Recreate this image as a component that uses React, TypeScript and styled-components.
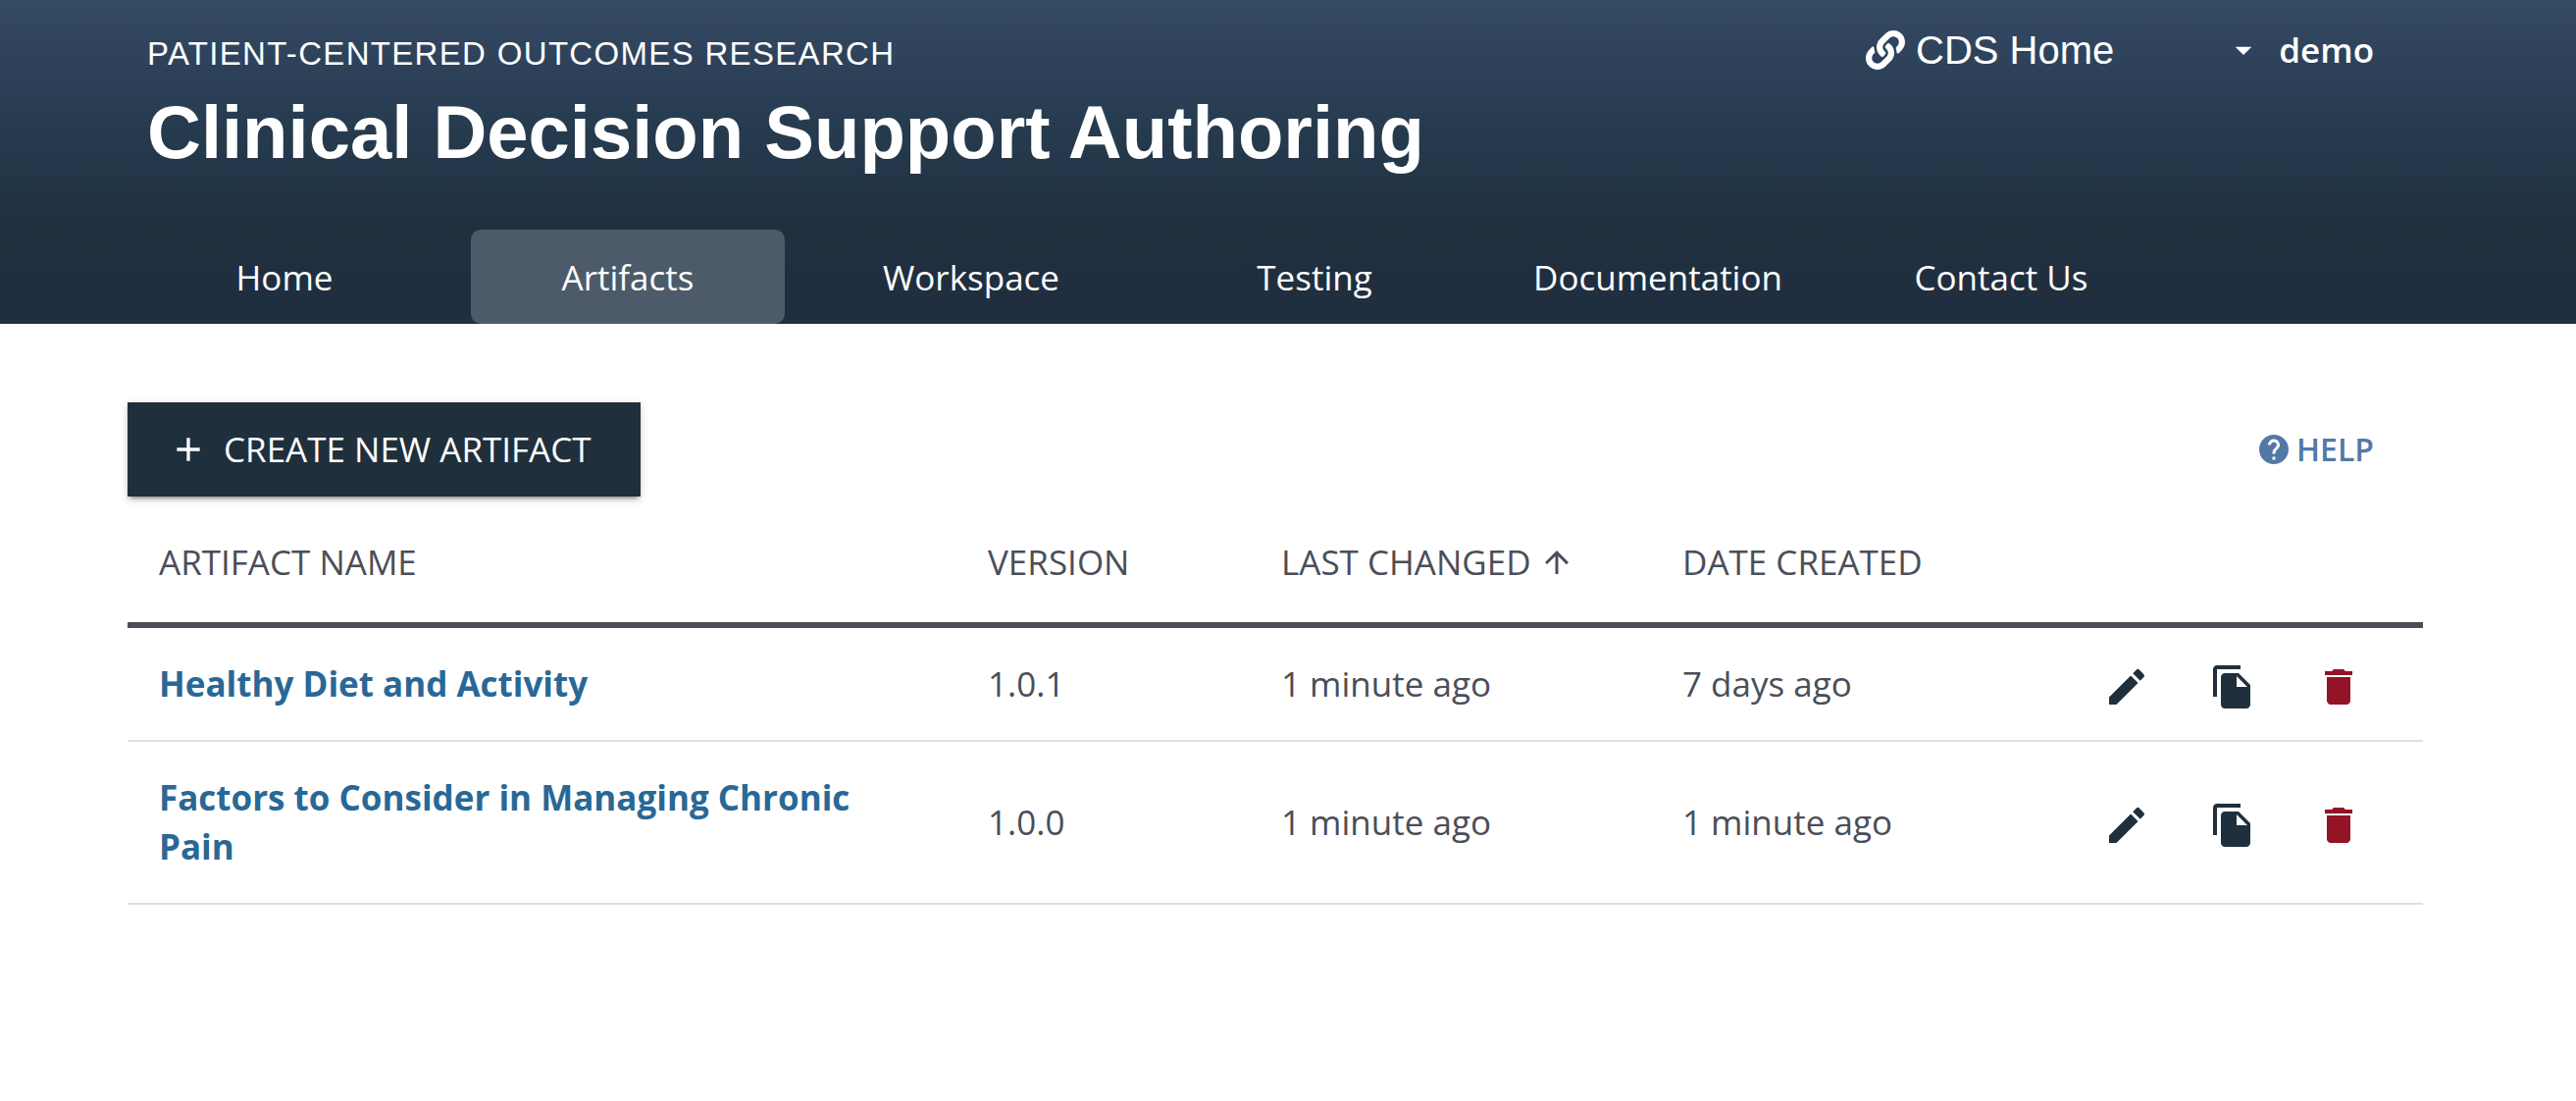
import React from "react";
import styled, { createGlobalStyle } from "styled-components";
import { FaLink } from "react-icons/fa";
import {
  MdAdd,
  MdArrowDropDown,
  MdArrowUpward,
  MdDelete,
  MdEdit,
  MdFileCopy,
  MdHelp,
} from "react-icons/md";

const sans = `"Open Sans", "Noto Sans", sans-serif`;
const display = `"Liberation Sans", Arial, sans-serif`;

const color = {
  navy: "#202f3c",
  grey: "#4b4e58",
  link: "#296896",
  help: "#5279a6",
  danger: "#931427",
  rule: "#e0e0e0",
};

const GlobalStyle = createGlobalStyle`
  *, *::before, *::after { box-sizing: border-box; }
  body {
    margin: 0;
    background: #fff;
    color: ${color.grey};
    font-family: ${sans};
    font-size: 35px;
    line-height: 50px;
  }
  button { font: inherit; border: 0; background: none; cursor: pointer; }
  a { text-decoration: none; }
  svg { display: block; flex: none; }
`;

const Header = styled.header`
  padding: 0 156px 0 130px;
  color: #fff;
  background: linear-gradient(
    #354b63 0,
    #2c4058 80px,
    #263a4e 140px,
    #20303f 230px,
    #202e3f 330px
  );
`;

const Masthead = styled.div`
  display: flex;
  justify-content: space-between;
  align-items: flex-start;
  padding: 27px 50px 55px 20px;
`;

const Brand = styled.h1`
  display: flex;
  flex-direction: column;
  gap: 16px;
  margin: 0;
  padding-top: 8px;
  font-family: ${display};
`;

const Tagline = styled.span`
  font-size: 33px;
  font-weight: 400;
  line-height: 40px;
  letter-spacing: 0.04em;
  text-transform: uppercase;
`;

const Title = styled.span`
  font-size: 76px;
  font-weight: 700;
  line-height: 88px;
`;

const Account = styled.div`
  display: flex;
  align-items: center;
  gap: 112px;
  height: 48px;
`;

const HomeLink = styled.a`
  display: flex;
  align-items: center;
  gap: 11px;
  color: #fff;
  font-family: ${display};
  font-size: 40px;
  line-height: 48px;
`;

const UserButton = styled.button`
  display: flex;
  align-items: center;
  gap: 16px;
  padding: 0;
  color: #fff;
  font-weight: 600;
`;

const Nav = styled.nav`
  display: flex;
  gap: 30px;
`;

const NavLink = styled.a<{ $active?: boolean }>`
  display: flex;
  align-items: center;
  justify-content: center;
  width: 320px;
  height: 96px;
  padding-top: 2px;
  border-radius: 10px;
  color: #fff;
  background: ${(p) => (p.$active ? "#4d5a69" : "transparent")};
`;

const Main = styled.main`
  padding: 80px 156px 80px 130px;
`;

const Toolbar = styled.div`
  display: flex;
  align-items: center;
  justify-content: space-between;
  padding-right: 50px;
`;

const CreateButton = styled.button`
  display: flex;
  align-items: center;
  gap: 16px;
  height: 96px;
  padding: 0 50px 0 42px;
  color: #fff;
  background: ${color.navy};
  text-transform: uppercase;
  box-shadow:
    0 6px 2px -4px rgba(0, 0, 0, 0.2),
    0 4px 4px rgba(0, 0, 0, 0.14),
    0 2px 10px rgba(0, 0, 0, 0.12);
`;

const HelpLink = styled.a`
  display: flex;
  align-items: center;
  gap: 5px;
  color: ${color.help};
  font-size: 32px;
  font-weight: 600;
  text-transform: uppercase;
`;

const Table = styled.table`
  width: 100%;
  margin-top: 10px;
  table-layout: fixed;
  border-collapse: separate;
  border-spacing: 0;
`;

const Col = styled.col<{ $width?: number }>`
  width: ${(p) => (p.$width ? `${p.$width}px` : "auto")};
`;

const HeadCell = styled.th`
  padding: 32px 32px 36px;
  border-bottom: 6px solid ${color.grey};
  font-weight: 400;
  text-align: left;
  text-transform: uppercase;
`;

const SortButton = styled.button`
  display: flex;
  align-items: center;
  gap: 8px;
  padding: 0;
  color: inherit;
  text-transform: inherit;
  white-space: nowrap;
`;

const Cell = styled.td`
  padding: 32px;
  border-bottom: 2px solid ${color.rule};
  vertical-align: middle;
`;

const NameCell = styled(Cell)`
  padding-right: 64px;
`;

const ArtifactLink = styled.a`
  color: ${color.link};
  font-weight: 700;
`;

const ActionCell = styled(Cell)`
  padding: 22px 32px 16px;
`;

const Actions = styled.div`
  display: flex;
  justify-content: flex-end;
`;

const IconButton = styled.button<{ $danger?: boolean }>`
  padding: 14px 30px;
  color: ${(p) => (p.$danger ? color.danger : color.navy)};
`;

const navItems = [
  "Home",
  "Artifacts",
  "Workspace",
  "Testing",
  "Documentation",
  "Contact Us",
];

const artifacts = [
  {
    name: "Healthy Diet and Activity",
    version: "1.0.1",
    changed: "1 minute ago",
    created: "7 days ago",
  },
  {
    name: "Factors to Consider in Managing Chronic Pain",
    version: "1.0.0",
    changed: "1 minute ago",
    created: "1 minute ago",
  },
];

export default function App() {
  return (
    <>
      <GlobalStyle />
      <Header>
        <Masthead>
          <Brand>
            <Tagline>Patient-Centered Outcomes Research</Tagline>
            <Title>Clinical Decision Support Authoring</Title>
          </Brand>
          <Account>
            <HomeLink href="#cds">
              <FaLink size={40} />
              CDS Home
            </HomeLink>
            <UserButton type="button">
              <MdArrowDropDown size={40} />
              demo
            </UserButton>
          </Account>
        </Masthead>
        <Nav>
          {navItems.map((item) => (
            <NavLink key={item} href="#" $active={item === "Artifacts"}>
              {item}
            </NavLink>
          ))}
        </Nav>
      </Header>
      <Main>
        <Toolbar>
          <CreateButton type="button">
            <MdAdd size={40} />
            Create New Artifact
          </CreateButton>
          <HelpLink href="#help">
            <MdHelp size={36} />
            Help
          </HelpLink>
        </Toolbar>
        <Table>
          <colgroup>
            <Col />
            <Col $width={299} />
            <Col $width={409} />
            <Col $width={399} />
            <Col $width={388} />
          </colgroup>
          <thead>
            <tr>
              <HeadCell scope="col">Artifact Name</HeadCell>
              <HeadCell scope="col">Version</HeadCell>
              <HeadCell scope="col" aria-sort="ascending">
                <SortButton type="button">
                  Last Changed
                  <MdArrowUpward size={36} />
                </SortButton>
              </HeadCell>
              <HeadCell scope="col">Date Created</HeadCell>
              <HeadCell as="td" />
            </tr>
          </thead>
          <tbody>
            {artifacts.map((a) => (
              <tr key={a.name}>
                <NameCell>
                  <ArtifactLink href="#">{a.name}</ArtifactLink>
                </NameCell>
                <Cell>{a.version}</Cell>
                <Cell>{a.changed}</Cell>
                <Cell>{a.created}</Cell>
                <ActionCell>
                  <Actions>
                    <IconButton type="button" aria-label="Edit">
                      <MdEdit size={48} />
                    </IconButton>
                    <IconButton type="button" aria-label="Duplicate">
                      <MdFileCopy size={48} />
                    </IconButton>
                    <IconButton type="button" aria-label="Delete" $danger>
                      <MdDelete size={48} />
                    </IconButton>
                  </Actions>
                </ActionCell>
              </tr>
            ))}
          </tbody>
        </Table>
      </Main>
    </>
  );
}
